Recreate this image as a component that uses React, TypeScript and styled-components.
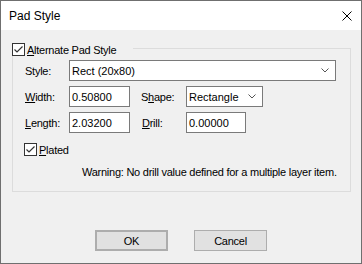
import React from 'react';
import styled, { createGlobalStyle } from 'styled-components';

const Global = createGlobalStyle`
  html, body { margin: 0; padding: 0; background: #ffffff; }
  * { box-sizing: border-box; }
`;

const Window = styled.div`
  width: 362px;
  height: 264px;
  border: 1px solid #6f6f6f;
  display: flex;
  flex-direction: column;
  background: #f0f0f0;
  font-family: "Liberation Sans", Arial, sans-serif;
  font-size: 11px;
  letter-spacing: -0.25px;
  color: #000;
`;

const TitleBar = styled.div`
  height: 29px;
  flex: none;
  background: #ffffff;
  display: flex;
  align-items: center;
  justify-content: space-between;
  padding: 0 9px 0 8px;
  font-size: 12px;
  letter-spacing: 0;
`;

const Body = styled.div`
  flex: 1;
  display: flex;
  flex-direction: column;
  padding: 18px 11px 0 11px;
`;

const GroupBox = styled.div`
  position: relative;
  width: 339px;
  height: 144px;
  border: 1px solid #dcdcdc;
  padding: 11px 14px 0 12px;
`;

const Legend = styled.div`
  position: absolute;
  top: -6px;
  left: -1px;
  width: 121px;
  height: 13px;
  display: flex;
  align-items: center;
  gap: 2px;
  background: #f0f0f0;
`;

const Box = styled.span`
  width: 13px;
  height: 13px;
  flex: none;
  border: 1px solid #333333;
  background: #ffffff;
  display: flex;
  align-items: center;
  justify-content: center;
`;

const Form = styled.div`
  display: grid;
  grid-template-columns: 44px 72px 45px 1fr;
  grid-auto-rows: 21px;
  row-gap: 5px;
  align-items: center;
`;

const Label = styled.span<{ $shift?: number }>`
  padding-left: ${(p) => p.$shift ?? 0}px;
  white-space: nowrap;
`;

const Field = styled.div<{ $w: number; $span?: number }>`
  width: ${(p) => p.$w}px;
  height: 21px;
  grid-column: span ${(p) => p.$span ?? 1};
  border: 1px solid #7a7a7a;
  background: #ffffff;
  display: flex;
  align-items: center;
  justify-content: space-between;
  padding: 0 6px 0 2px;
  letter-spacing: 0;
`;

const PlatedRow = styled.div`
  margin: 10px 0 0 -1px;
  height: 13px;
  display: flex;
  align-items: center;
  gap: 2px;
`;

const Warning = styled.div`
  margin: 10px 0 0 57px;
  line-height: 13px;
  white-space: nowrap;
`;

const Buttons = styled.div`
  margin-top: 38px;
  display: flex;
  justify-content: center;
  gap: 26px;
`;

const Button = styled.div<{ $default?: boolean }>`
  width: 73px;
  height: 21px;
  background: #e1e1e1;
  border: ${(p) => (p.$default ? '2px solid #adadad' : '1px solid #adadad')};
  display: flex;
  align-items: center;
  justify-content: center;
`;

const U = styled.span`
  text-decoration: underline;
  text-underline-offset: 1px;
`;

const Check = () => (
  <Box>
    <svg width="11" height="11" viewBox="0 0 11 11">
      <polyline points="1.5,5.5 4,8 9.5,2.5" fill="none" stroke="#333" strokeWidth="1.2" />
    </svg>
  </Box>
);

const Chevron = () => (
  <svg width="8" height="5" viewBox="0 0 8 5">
    <polyline points="0.5,0.5 4,4 7.5,0.5" fill="none" stroke="#555" strokeWidth="1" />
  </svg>
);

export default function App() {
  return (
    <>
      <Global />
      <Window>
        <TitleBar>
          <span>Pad Style</span>
          <svg width="10" height="10" viewBox="0 0 10 10">
            <path d="M0.5 0.5 L9.5 9.5 M9.5 0.5 L0.5 9.5" stroke="#000" strokeWidth="1" />
          </svg>
        </TitleBar>
        <Body>
          <GroupBox>
            <Legend>
              <Check />
              <span>
                <U>A</U>lternate Pad Style
              </span>
            </Legend>
            <Form>
              <Label>Style:</Label>
              <Field $w={267} $span={3}>
                <span>Rect (20x80)</span>
                <Chevron />
              </Field>
              <Label>
                <U>W</U>idth:
              </Label>
              <Field $w={61}>
                <span>0.50800</span>
              </Field>
              <Label>
                S<U>h</U>ape:
              </Label>
              <Field $w={77}>
                <span>Rectangle</span>
                <Chevron />
              </Field>
              <Label>
                <U>L</U>ength:
              </Label>
              <Field $w={61}>
                <span>2.03200</span>
              </Field>
              <Label $shift={1}>
                <U>D</U>rill:
              </Label>
              <Field $w={60}>
                <span>0.00000</span>
              </Field>
            </Form>
            <PlatedRow>
              <Check />
              <span>
                <U>P</U>lated
              </span>
            </PlatedRow>
            <Warning>Warning: No drill value defined for a multiple layer item.</Warning>
          </GroupBox>
          <Buttons>
            <Button $default>OK</Button>
            <Button>Cancel</Button>
          </Buttons>
        </Body>
      </Window>
    </>
  );
}
